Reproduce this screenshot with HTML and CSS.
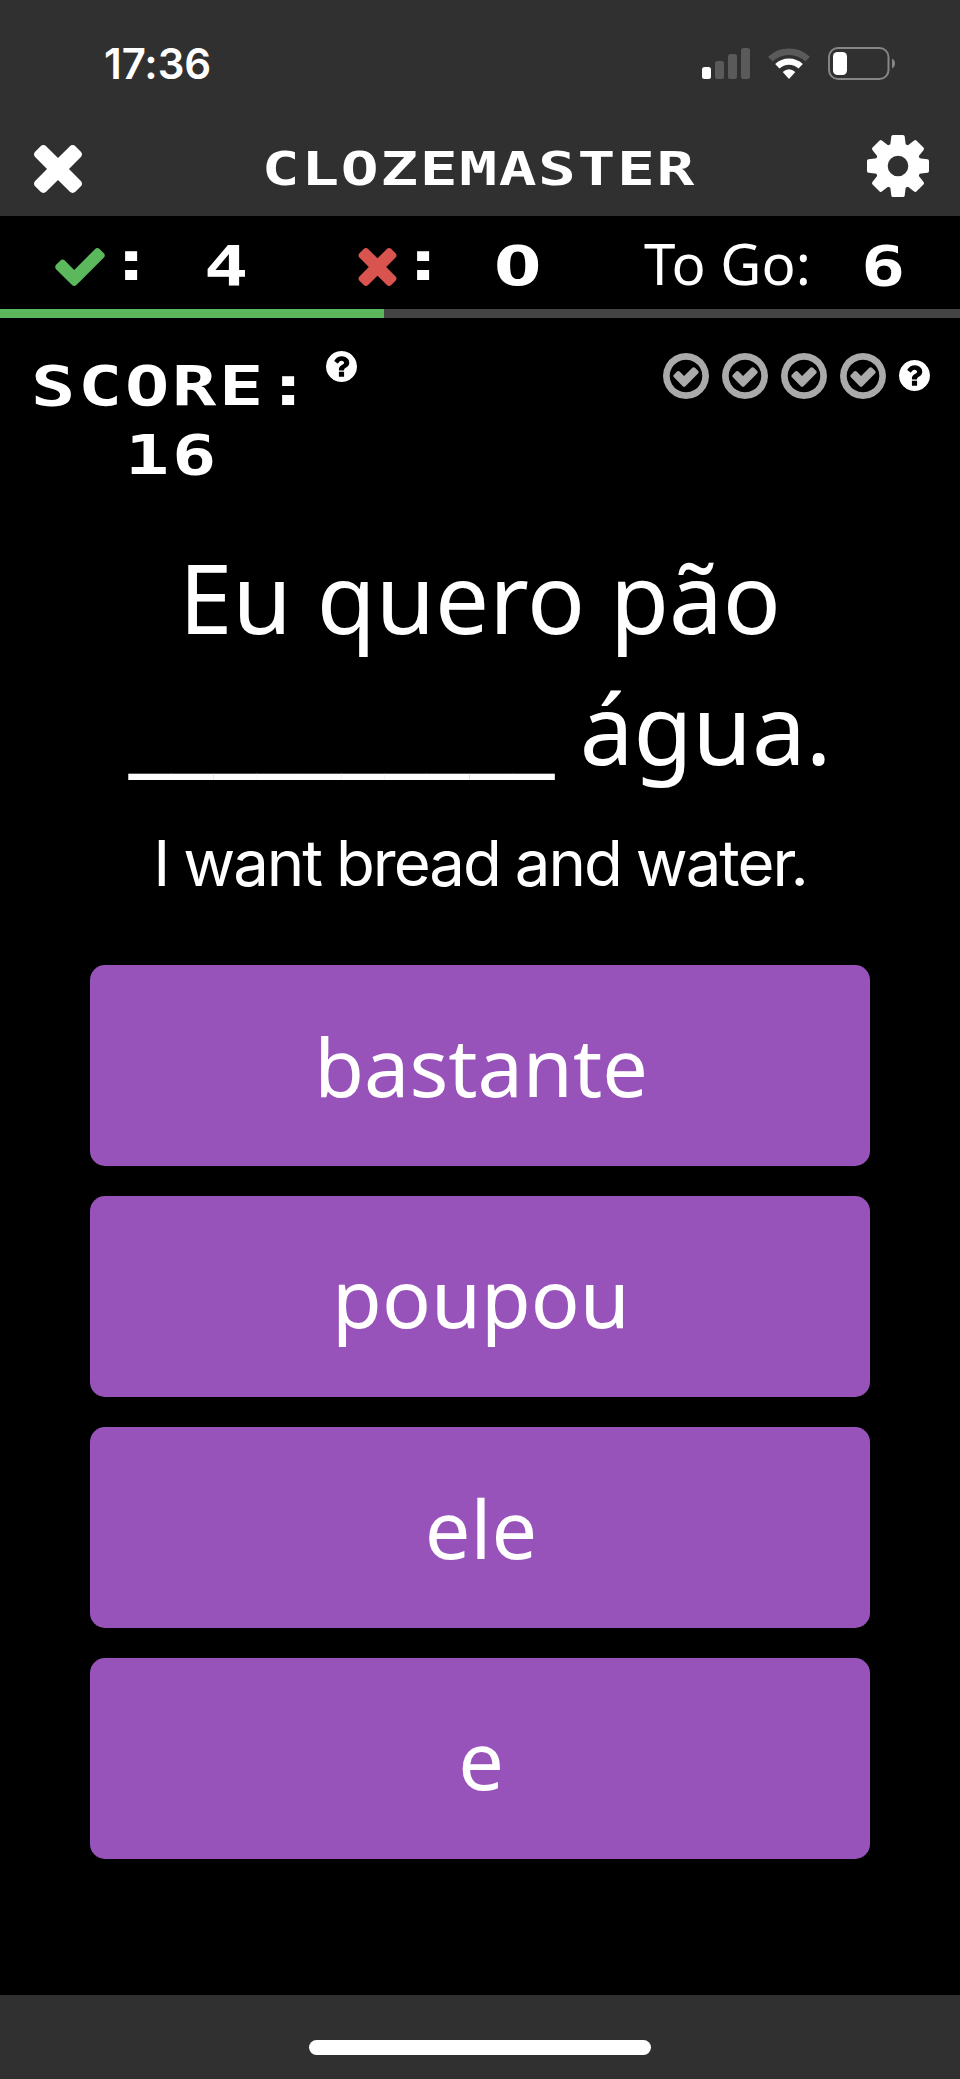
FILE: index.html
```html
<!DOCTYPE html>
<html lang="pt">
<head>
  <meta charset="UTF-8">
  <meta name="viewport" content="width=device-width, initial-scale=1">
  <title>Clozemaster</title>
  <link rel="stylesheet" href="styles.css">
</head>
<body>

<!-- shared icons -->
<svg class="sprites" width="0" height="0">
  <symbol id="times" viewBox="302 366 1188 1188">
    <path d="M1490 1322q0 40-28 68l-136 136q-28 28-68 28t-68-28l-294-294-294 294q-28 28-68 28t-68-28l-136-136q-28-28-28-68t28-68l294-294-294-294q-28-28-28-68t28-68l136-136q28-28 68-28t68 28l294 294 294-294q28-28 68-28t68 28l136 136q28 28 28 68t-28 68l-294 294 294 294q28 28 28 68z"/>
  </symbol>
  <symbol id="check" viewBox="121 334 1550 1188">
    <path d="M1671 566q0 40-28 68l-724 724-136 136q-28 28-68 28t-68-28l-136-136-362-362q-28-28-28-68t28-68l136-136q28-28 68-28t68 28l294 295 656-657q28-28 68-28t68 28l136 136q28 28 28 68z"/>
  </symbol>
  <symbol id="check-circle" viewBox="128 128 1536 1536">
    <path d="M1299 813l-422 422q-19 19-45 19t-45-19l-294-294q-19-19-19-45t19-45l102-102q19-19 45-19t45 19l147 147 275-275q19-19 45-19t45 19l102 102q19 19 19 45t-19 45zm141 83q0-148-73-273t-198-198-273-73-273 73-198 198-73 273 73 273 198 198 273 73 273-73 198-198 73-273zm224 0q0 209-103 385.5t-279.5 279.5-385.5 103-385.5-103-279.5-279.5-103-385.5 103-385.5 279.5-279.5 385.5-103 385.5 103 279.5 279.5 103 385.5z"/>
  </symbol>
  <symbol id="question" viewBox="128 128 1536 1536">
    <path d="M1024 1376v-192q0-14-9-23t-23-9h-192q-14 0-23 9t-9 23v192q0 14 9 23t23 9h192q14 0 23-9t9-23zm256-672q0-88-55.5-163t-138.5-116-170-41q-243 0-371 213-15 24 8 42l132 100q7 6 19 6 16 0 25-12 53-68 86-92 34-24 86-24 48 0 85.5 26t37.5 59q0 38-20 61t-68 45q-63 28-115.5 86.5t-52.5 125.5v36q0 14 9 23t23 9h192q14 0 23-9t9-23q0-19 21.5-49.5t54.5-49.5q32-18 49-28.5t46-35 44.5-48 28-60.5 12.5-81zm384 192q0 209-103 385.5t-279.5 279.5-385.5 103-385.5-103-279.5-279.5-103-385.5 103-385.5 279.5-279.5 385.5-103 385.5 103 279.5 279.5 103 385.5z"/>
  </symbol>
  <symbol id="gear" viewBox="-31 -31 62 62">
    <defs><path id="tooth" d="M-8 -19L-6.7 -29.5Q-6.5 -31 -5 -31H5Q6.5 -31 6.7 -29.5L8 -19Z"/></defs>
    <path fill-rule="evenodd" d="M0 -23A23 23 0 1 1 0 23A23 23 0 1 1 0 -23ZM0 -10.3A10.3 10.3 0 1 0 0 10.3A10.3 10.3 0 1 0 0 -10.3Z"/>
    <use href="#tooth"/>
    <use href="#tooth" transform="rotate(45)"/>
    <use href="#tooth" transform="rotate(90)"/>
    <use href="#tooth" transform="rotate(135)"/>
    <use href="#tooth" transform="rotate(180)"/>
    <use href="#tooth" transform="rotate(225)"/>
    <use href="#tooth" transform="rotate(270)"/>
    <use href="#tooth" transform="rotate(315)"/>
  </symbol>
</svg>

<div class="status-bar">
  <span class="time">17:36</span>
  <div class="status-icons">
    <svg width="48" height="33" viewBox="0 0 48 33">
      <rect x="0" y="20" width="9" height="12" rx="2.5"/>
      <g fill="#5a5a5a">
        <rect x="13" y="14" width="9" height="18" rx="2.5"/>
        <rect x="26" y="7" width="9" height="25" rx="2.5"/>
        <rect x="39" y="1" width="9" height="31" rx="2.5"/>
      </g>
    </svg>
    <svg width="42" height="33" viewBox="0 0 42 33">
      <path d="M2.3 12.2A27 27 0 0 1 39.7 12.2" fill="none" stroke="#5a5a5a" stroke-width="6.5"/>
      <path d="M9.3 19.3A17 17 0 0 1 32.7 19.3" fill="none" stroke="#fff" stroke-width="6.2"/>
      <path d="M14.7 25Q21 19.5 27.3 25L21 32Z"/>
    </svg>
    <svg width="68" height="33" viewBox="0 0 68 33">
      <rect x="1" y="1" width="59.5" height="31" rx="9" fill="none" stroke="#868686" stroke-width="2"/>
      <path d="M64 11.5Q67 13.2 67 16.5T64 21.5Z" fill="#868686"/>
      <rect x="5" y="5" width="14" height="23" rx="4.5"/>
    </svg>
  </div>
</div>

<header class="header">
  <svg class="close" width="48" height="48"><use href="#times"/></svg>
  <h1 class="title pixel">CLOZEMASTER</h1>
  <svg class="settings" width="62" height="62"><use href="#gear"/></svg>
</header>

<div class="stats">
  <svg class="correct" width="50" height="38"><use href="#check"/></svg>
  <span class="pixel colon">:</span>
  <span class="pixel count-correct">4</span>
  <svg class="wrong" width="39" height="38"><use href="#times"/></svg>
  <span class="pixel colon">:</span>
  <span class="pixel count-wrong">0</span>
  <span class="to-go">To Go:</span>
  <span class="pixel count-left">6</span>
</div>

<div class="progress"><div class="progress-value" style="width: 40%"></div></div>

<main class="game">
  <div class="info">
    <div class="score pixel">SCORE:<br>16</div>
    <svg class="score-help" width="31" height="31"><use href="#question"/></svg>
    <div class="mastery">
      <svg class="level" width="46" height="46"><use href="#check-circle"/></svg>
      <svg class="level" width="46" height="46"><use href="#check-circle"/></svg>
      <svg class="level" width="46" height="46"><use href="#check-circle"/></svg>
      <svg class="level" width="46" height="46"><use href="#check-circle"/></svg>
      <svg class="help" width="31" height="31"><use href="#question"/></svg>
    </div>
  </div>

  <p class="sentence">Eu quero pão<br>__________ água.</p>
  <p class="translation">I want bread and water.</p>

  <div class="choices">
    <button class="choice">bastante</button>
    <button class="choice">poupou</button>
    <button class="choice">ele</button>
    <button class="choice">e</button>
  </div>
</main>

<footer class="footer"><div class="home-bar"></div></footer>

</body>
</html>
```

FILE: styles.css
```css
* {
  box-sizing: border-box;
}
body {
  margin: 0;
  height: 2079px;
  display: flex;
  flex-direction: column;
  background: #000;
  color: #fff;
  font-family: "Noto Sans", sans-serif;
}
svg {
  display: block;
  flex: none;
  fill: #fff;
}
.sprites {
  position: absolute;
}

/* wide, blocky lettering */
.pixel {
  font-family: "DejaVu Sans Mono", monospace;
  font-weight: bold;
  font-size: 54.5px;
  line-height: 69px;
  letter-spacing: 2px;
  transform: scaleX(1.35);
  transform-origin: 0 50%;
}

.status-bar {
  height: 116px;
  padding: 30px 64px 0 104px;
  display: flex;
  justify-content: space-between;
  background: #303030;
}
.time {
  font-family: Inter, sans-serif;
  font-weight: 600;
  font-size: 42px;
  line-height: 68px;
  letter-spacing: -0.1px;
}
.status-icons {
  display: flex;
  gap: 18px;
  padding-top: 17px;
}

.header {
  height: 100px;
  padding: 0 31px 0 34px;
  display: flex;
  align-items: center;
  justify-content: space-between;
  background: #303030;
}
.close {
  margin-top: 6px;
}
.title {
  margin: 7px 0 0 8px;
  font-size: 46.6px;
  letter-spacing: 1.2px;
  transform-origin: 50% 50%;
}

.stats {
  height: 93px;
  padding: 8px 0 0 55px;
  display: flex;
  align-items: center;
}
.stats .pixel {
  width: 47px;
}
.correct {
  fill: #5cb85c;
}
.wrong {
  fill: #d9534f;
  margin-left: 107px;
}
.stats .colon {
  margin: -10px 0 0 4px;
}
.count-correct {
  margin-left: 48px;
}
/* the mono face has a dotted zero */
.stats .count-wrong {
  margin-left: 46px;
  font-family: "DejaVu Sans", sans-serif;
  transform: scaleX(1.25);
}
.to-go {
  width: 170px;
  margin: -6px 0 0 103px;
  font-size: 56.5px;
}
.count-left {
  margin-left: 47px;
}

.progress {
  height: 9px;
  background: #444;
}
.progress-value {
  height: 9px;
  background: #5cb85c;
}

.game {
  flex: 1;
}
.info {
  height: 213px;
  padding: 33px 30px 0 31px;
  display: flex;
}
.score {
  width: 209px;
  padding-top: 1px;
  text-align: center;
}
.score-help {
  margin-left: 86px;
}
.mastery {
  margin: 2px 0 0 auto;
  display: flex;
  gap: 13px;
}
.level {
  fill: #aaa;
}
.help {
  margin-top: 7px;
}

.sentence {
  margin: 0;
  text-align: center;
  font-size: 96px;
  line-height: 131px;
}
.translation {
  margin: 26px 0 0;
  text-align: center;
  font-family: Inter, sans-serif;
  font-size: 63.5px;
  line-height: 88px;
  letter-spacing: -2px;
  word-spacing: -1px;
}

.choices {
  display: flex;
  flex-direction: column;
  gap: 30px;
  padding: 58px 90px 0;
}
.choice {
  height: 201px;
  padding: 0 0 0 2px;
  border: 0;
  border-radius: 15px;
  background: #9853ba;
  color: #fff;
  font-family: "Noto Sans", sans-serif;
  font-size: 81px;
  line-height: 201px;
}

.footer {
  height: 84px;
  padding-top: 45px;
  background: #303030;
}
.home-bar {
  width: 342px;
  height: 15px;
  margin: 0 auto;
  border-radius: 8px;
  background: #fff;
}
```
